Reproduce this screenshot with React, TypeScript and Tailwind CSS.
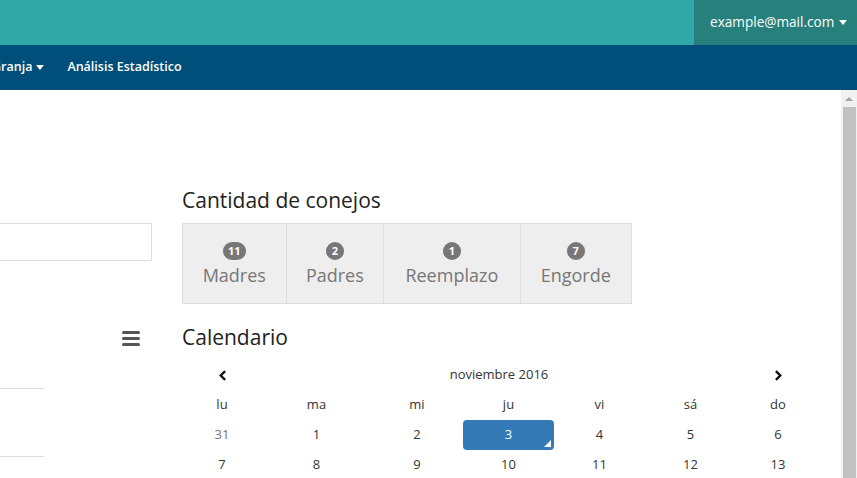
import React from "react";

const font = "font-['Open_Sans','Noto_Sans',sans-serif]";

const Caret = ({ gap = "ml-[5px]" }: { gap?: string }) => (
  <span className={`inline-block ${gap} align-middle border-x-[4px] border-t-[5px] border-x-transparent border-t-white`} />
);

const Chevron = ({ dir }: { dir: "left" | "right" }) => (
  <svg viewBox="0 0 10 12" className="w-[9px] h-[11px]" fill="none" stroke="#111" strokeWidth="2.6" strokeLinecap="square">
    {dir === "left" ? <path d="M7 2 L3 6 L7 10" /> : <path d="M3 2 L7 6 L3 10" />}
  </svg>
);

const stats = [
  { n: "11", label: "Madres", w: "w-[103px]" },
  { n: "2", label: "Padres", w: "w-[98px]" },
  { n: "1", label: "Reemplazo", w: "w-[137px]" },
  { n: "7", label: "Engorde", w: "w-[112px]" },
];

const weekdays = ["lu", "ma", "mi", "ju", "vi", "sá", "do"];
const weeks = [
  ["31", "1", "2", "3", "4", "5", "6"],
  ["7", "8", "9", "10", "11", "12", "13"],
];

export default function App() {
  return (
    <div className={`${font} w-[857px] h-[478px] overflow-hidden bg-white text-[#333]`}>
      {/* top bar */}
      <header className="h-[45px] bg-[#31a8a8] flex justify-end">
        <div className="w-[163px] bg-[#27807c] flex items-center pl-[16px] text-white text-[13.6px]">
          example@mail.com
          <Caret />
        </div>
      </header>

      {/* nav */}
      <nav className="h-[45px] bg-[#004f7a] flex items-center text-white text-[12.5px] font-semibold overflow-hidden">
        <span className="-ml-[8px] whitespace-nowrap">
          Granja
          <Caret gap="ml-[4px]" />
        </span>
        <span className="ml-[23px]">Análisis Estadístico</span>
      </nav>

      <div className="flex h-[388px]">
        <div className="flex-1 flex gap-[30px] overflow-hidden">
          {/* left column */}
          <aside className="w-[152px] shrink-0 flex flex-col">
            <div className="mt-[133px] h-[38px] border border-l-0 border-[#dddddd]" />
            <div className="mt-[70px] flex justify-end pr-[12px]">
              <div className="w-[18px] flex flex-col gap-[3px]">
                <span className="h-[3px] bg-[#555] rounded-sm" />
                <span className="h-[3px] bg-[#555] rounded-sm" />
                <span className="h-[3px] bg-[#555] rounded-sm" />
              </div>
            </div>
            <div className="mt-[42px] w-[44px] h-px bg-[#dddddd]" />
            <div className="mt-[67px] w-[44px] h-px bg-[#dddddd]" />
          </aside>

          {/* main column */}
          <main className="w-[638px] shrink-0 pt-[98px]">
            <h2 className="text-[21px] leading-[24px] text-[#222] mb-[11px]">Cantidad de conejos</h2>
            <div className="flex border border-[#dddddd] bg-[#eeeeee] w-[450px] h-[81px]">
              {stats.map((s, i) => (
                <div
                  key={s.label}
                  className={`${s.w} flex flex-col items-center pt-[18px] ${i > 0 ? "border-l border-[#dddddd]" : ""}`}
                >
                  <span className="min-w-[18px] h-[18px] px-[5px] rounded-full bg-[#777] text-white text-[11px] font-bold leading-[18px] text-center">
                    {s.n}
                  </span>
                  <span className="text-[18px] leading-[24px] text-[#777] mt-[3px]">{s.label}</span>
                </div>
              ))}
            </div>

            <h2 className="text-[21px] leading-[24px] text-[#222] mt-[21px] mb-[11px]">Calendario</h2>
            <div className="grid grid-cols-[80px_109px_92px_91px_91px_91px_84px] text-[13px] text-center">
              <div className="h-[30px] flex items-center justify-center">
                <Chevron dir="left" />
              </div>
              <div className="col-span-5 h-[30px] flex items-center justify-center">noviembre 2016</div>
              <div className="h-[30px] flex items-center justify-center">
                <Chevron dir="right" />
              </div>
              {weekdays.map((d) => (
                <div key={d} className="h-[30px] flex items-center justify-center">
                  {d}
                </div>
              ))}
              {weeks.flat().map((d, i) => (
                <div
                  key={i}
                  className={`h-[30px] flex items-center justify-center relative ${
                    d === "3" ? "bg-[#337ab7] text-white rounded-[4px]" : i === 0 ? "text-[#777]" : ""
                  }`}
                >
                  {d}
                  {d === "3" && (
                    <span className="absolute right-[3px] bottom-[3px] border-l-[7px] border-l-transparent border-b-[7px] border-b-white" />
                  )}
                </div>
              ))}
            </div>
          </main>
        </div>

        {/* scrollbar */}
        <div className="w-[16px] bg-[#f1f1f1] flex flex-col items-center">
          <div className="h-[17px] flex items-center justify-center">
            <span className="border-x-[4px] border-b-[4px] border-x-transparent border-b-[#a3a3a3]" />
          </div>
          <div className="flex-1 w-[13px] bg-[#c1c1c1]" />
        </div>
      </div>
    </div>
  );
}
